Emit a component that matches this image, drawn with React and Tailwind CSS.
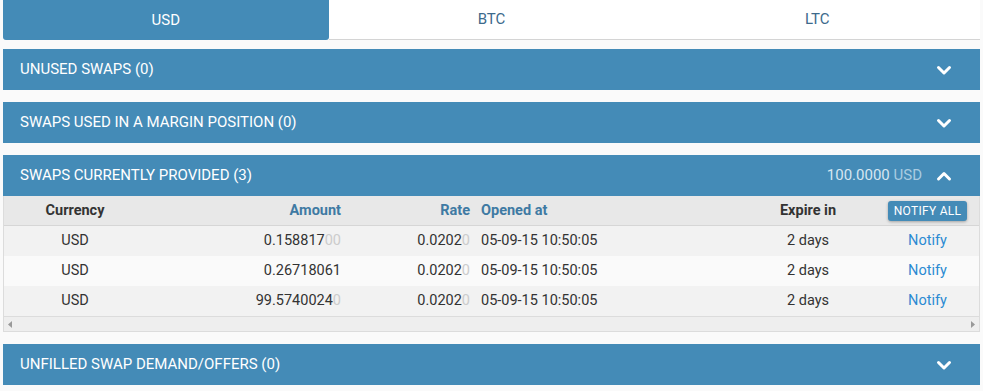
import React, { useState } from "react";

const font = { fontFamily: "Roboto, 'Liberation Sans', sans-serif" };

const Chevron = ({ up }) => (
  <svg width="16" height="16" viewBox="0 0 16 16" className="text-white">
    <path
      d={up ? "M2.5 11 L8 5.5 L13.5 11" : "M2.5 5.5 L8 11 L13.5 5.5"}
      fill="none"
      stroke="currentColor"
      strokeWidth="3"
      strokeLinecap="round"
      strokeLinejoin="round"
    />
  </svg>
);

const Panel = ({ title, right, open, children }) => (
  <div>
    <div className="flex items-center justify-between h-[41px] bg-[#448bb7] text-white text-[15px] pl-[17px] pr-[28px]">
      <span>{title}</span>
      <div className="flex items-center gap-[14px]">
        {right}
        <Chevron up={open} />
      </div>
    </div>
    {open && children}
  </div>
);

const rows = [
  { amount: "0.158817", faded: "00" },
  { amount: "0.26718061", faded: "" },
  { amount: "99.5740024", faded: "0" },
];

const cols = "grid grid-cols-[142px_202px_130px_262px_136px_1fr] items-center";

const App = () => {
  const [tab, setTab] = useState("USD");

  return (
    <div className="w-[983px] h-[391px] bg-[#fafafa] px-[3px] overflow-hidden" style={font}>
      <div className="flex bg-white h-[40px] w-[977px]">
        {["USD", "BTC", "LTC"].map((t) => (
          <button
            key={t}
            onClick={() => setTab(t)}
            className={
              tab === t
                ? "flex-1 bg-[#448bb7] text-white text-[15px] rounded-b-[3px]"
                : "flex-1 text-[#3d6a8c] text-[15px] border-b border-[#d4d4d4]"
            }
          >
            {t}
          </button>
        ))}
      </div>

      <div className="flex flex-col gap-[12px] mt-[9px] w-[977px]">
        <Panel title="UNUSED SWAPS (0)" />
        <Panel title="SWAPS USED IN A MARGIN POSITION (0)" />
        <Panel
          title="SWAPS CURRENTLY PROVIDED (3)"
          open
          right={
            <span>
              <span className="text-[#d6e6f1]">100.0000</span>{" "}
              <span className="text-[#a9cbe1]">USD</span>
            </span>
          }
        >
          <div className="border-x border-b border-[#dcdcdc] text-[14.5px] text-[#333]">
            <div className={`${cols} h-[30px] bg-[#e8e8e8] border-b border-[#d6d6d6] font-bold`}>
              <div className="text-center">Currency</div>
              <div className="text-right pr-[7px] text-[#3f7aa3]">Amount</div>
              <div className="text-right pr-[8px] text-[#3f7aa3]">Rate</div>
              <div className="pl-[3px] text-[#3f7aa3]">Opened at</div>
              <div className="text-center">Expire in</div>
              <div className="flex justify-center">
                <button className="h-[20px] px-[6px] bg-[#448bb7] text-white text-[12px] font-normal rounded-[3px] shadow-[0_1px_3px_rgba(0,0,0,0.3)] tracking-[0.3px]">
                  NOTIFY ALL
                </button>
              </div>
            </div>
            {rows.map((r, i) => (
              <div
                key={i}
                className={`${cols} h-[30px] ${i === 1 ? "bg-[#fafafa]" : "bg-[#f2f2f2]"}`}
              >
                <div className="text-center">USD</div>
                <div className="text-right pr-[7px]">
                  {r.amount}
                  <span className="text-[#cccccc]">{r.faded}</span>
                </div>
                <div className="text-right pr-[8px]">
                  0.0202<span className="text-[#cccccc]">0</span>
                </div>
                <div className="pl-[3px]">05-09-15 10:50:05</div>
                <div className="text-center">2 days</div>
                <div className="text-center text-[#2a8ad2]">Notify</div>
              </div>
            ))}
            <div className="flex items-center justify-between h-[15px] bg-[#eeeeee] border-t border-[#dcdcdc] px-[4px] text-[#999]">
              <svg width="4" height="7" viewBox="0 0 4 7">
                <path d="M4 0 L0 3.5 L4 7 Z" fill="currentColor" />
              </svg>
              <svg width="4" height="7" viewBox="0 0 4 7">
                <path d="M0 0 L4 3.5 L0 7 Z" fill="currentColor" />
              </svg>
            </div>
          </div>
        </Panel>
        <Panel title="UNFILLED SWAP DEMAND/OFFERS (0)" />
      </div>
    </div>
  );
};

export default App;
